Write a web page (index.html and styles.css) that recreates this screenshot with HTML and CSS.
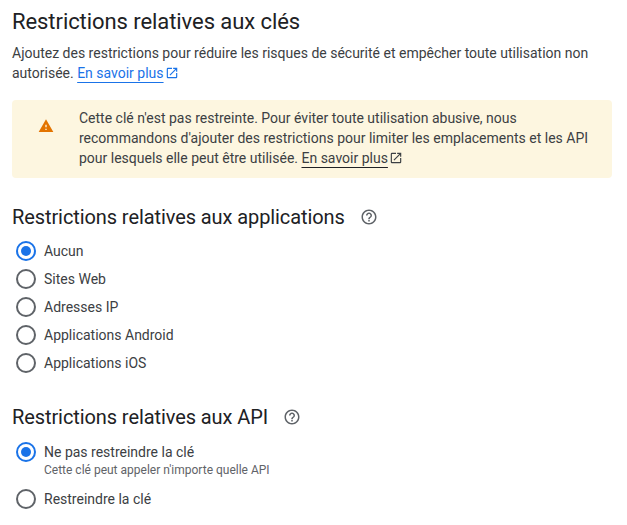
FILE: index.html
```html
<!DOCTYPE html>
<html lang="fr">
  <head>
    <title>Restrictions relatives aux clés</title>
    <meta charset="utf-8">
    <link rel="stylesheet" href="styles.css">
  </head>
  <body>
    <h2 class="page-title">Restrictions relatives aux clés</h2>
    <p class="intro">Ajoutez des restrictions pour réduire les risques de sécurité et empêcher toute utilisation non autorisée. <a class="link" href="#">En savoir plus</a><svg class="ext-icon blue" viewBox="0 0 24 24"><path d="M19 19H5V5h7V3H5a2 2 0 0 0-2 2v14a2 2 0 0 0 2 2h14a2 2 0 0 0 2-2v-7h-2v7zM14 3v2h3.59l-9.83 9.83 1.41 1.41L19 6.41V10h2V3h-7z"/></svg></p>

    <div class="warning">
      <div class="warning-icon">
        <svg viewBox="0 0 24 24"><path d="M1 21h22L12 2 1 21zm12-3h-2v-2h2v2zm0-4h-2v-4h2v4z"/></svg>
      </div>
      <div class="warning-text">Cette clé n'est pas restreinte. Pour éviter toute utilisation abusive, nous recommandons d'ajouter des restrictions pour limiter les emplacements et les API pour lesquels elle peut être utilisée. <a class="link dark" href="#">En savoir plus</a><svg class="ext-icon" viewBox="0 0 24 24"><path d="M19 19H5V5h7V3H5a2 2 0 0 0-2 2v14a2 2 0 0 0 2 2h14a2 2 0 0 0 2-2v-7h-2v7zM14 3v2h3.59l-9.83 9.83 1.41 1.41L19 6.41V10h2V3h-7z"/></svg></div>
    </div>

    <div class="section-head first">
      <h3>Restrictions relatives aux applications</h3>
      <svg class="help" viewBox="0 0 24 24"><path d="M11 18h2v-2h-2v2zm1-16C6.48 2 2 6.48 2 12s4.48 10 10 10 10-4.48 10-10S17.52 2 12 2zm0 18c-4.41 0-8-3.59-8-8s3.59-8 8-8 8 3.59 8 8-3.59 8-8 8zm0-14c-2.21 0-4 1.79-4 4h2c0-1.1.9-2 2-2s2 .9 2 2c0 2-3 1.75-3 5h2c0-2.25 3-2.5 3-5 0-2.21-1.79-4-4-4z"/></svg>
    </div>
    <div class="radio-group">
      <label class="radio-row"><input type="radio" name="app" checked><span>Aucun</span></label>
      <label class="radio-row"><input type="radio" name="app"><span>Sites Web</span></label>
      <label class="radio-row"><input type="radio" name="app"><span>Adresses IP</span></label>
      <label class="radio-row"><input type="radio" name="app"><span>Applications Android</span></label>
      <label class="radio-row"><input type="radio" name="app"><span>Applications iOS</span></label>
    </div>

    <div class="section-head second">
      <h3>Restrictions relatives aux API</h3>
      <svg class="help" viewBox="0 0 24 24"><path d="M11 18h2v-2h-2v2zm1-16C6.48 2 2 6.48 2 12s4.48 10 10 10 10-4.48 10-10S17.52 2 12 2zm0 18c-4.41 0-8-3.59-8-8s3.59-8 8-8 8 3.59 8 8-3.59 8-8 8zm0-14c-2.21 0-4 1.79-4 4h2c0-1.1.9-2 2-2s2 .9 2 2c0 2-3 1.75-3 5h2c0-2.25 3-2.5 3-5 0-2.21-1.79-4-4-4z"/></svg>
    </div>
    <div class="radio-group">
      <label class="radio-row tall"><input type="radio" name="api" checked><span>Ne pas restreindre la clé<small>Cette clé peut appeler n'importe quelle API</small></span></label>
      <label class="radio-row"><input type="radio" name="api"><span>Restreindre la clé</span></label>
    </div>
  </body>
</html>
```

FILE: styles.css
```css
body {
  font-family: Roboto, sans-serif;
  font-size: 14px;
  line-height: 20px;
  color: #3c4043;
  background-color: #fff;
  margin: 0;
  padding: 10px 15px 0 12px;
}

.page-title {
  font-size: 22px;
  font-weight: 400;
  line-height: 24px;
  letter-spacing: -0.07px;
  color: #202124;
  margin: 0 0 9px 0;
}

.intro {
  margin: 0 0 17px 0;
}

.link {
  color: #1a73e8;
  text-decoration: underline;
  text-decoration-thickness: 1px;
  text-underline-offset: 4px;
}

.link.dark {
  color: #3c4043;
  text-decoration-color: #202124;
}

.ext-icon {
  width: 14px;
  height: 14px;
  margin-left: 1px;
  vertical-align: -2px;
  fill: #3c4043;
}

.ext-icon.blue {
  fill: #1a73e8;
}

.warning {
  display: flex;
  background-color: #fdf6e0;
  border-radius: 4px;
  padding: 8px 0 10px 0;
}

.warning-icon {
  width: 67px;
  flex-shrink: 0;
  padding-top: 10px;
  padding-left: 26px;
  box-sizing: border-box;
}

.warning-icon svg {
  width: 16px;
  height: 16px;
  fill: #e37400;
  display: block;
}

.warning-text {
  padding-right: 20px;
}

.section-head {
  display: flex;
  align-items: center;
}

.section-head.first {
  margin: 27px 0 8px 0;
}

.section-head.second {
  margin: 28px 0 9px 0;
}

.section-head h3 {
  font-size: 20px;
  font-weight: 400;
  line-height: 24px;
  letter-spacing: -0.09px;
  color: #202124;
  margin: 0;
}

.help {
  width: 18px;
  height: 18px;
  fill: #5f6368;
  margin-left: 15px;
}

.radio-row {
  display: flex;
  align-items: flex-start;
  min-height: 28px;
  padding-top: 4px;
  box-sizing: border-box;
}

.radio-row input {
  appearance: none;
  width: 20px;
  height: 20px;
  margin: 0 8px 0 4px;
  border: 2px solid #5f6368;
  border-radius: 50%;
  box-sizing: border-box;
  flex-shrink: 0;
  display: flex;
  align-items: center;
  justify-content: center;
}

.radio-row input:checked {
  border-color: #1a73e8;
}

.radio-row input:checked::before {
  content: "";
  width: 10px;
  height: 10px;
  border-radius: 50%;
  background-color: #1a73e8;
}

.radio-row small {
  display: block;
  font-size: 12px;
  line-height: 16px;
  color: #5f6368;
  margin-bottom: 7px;
}
```
